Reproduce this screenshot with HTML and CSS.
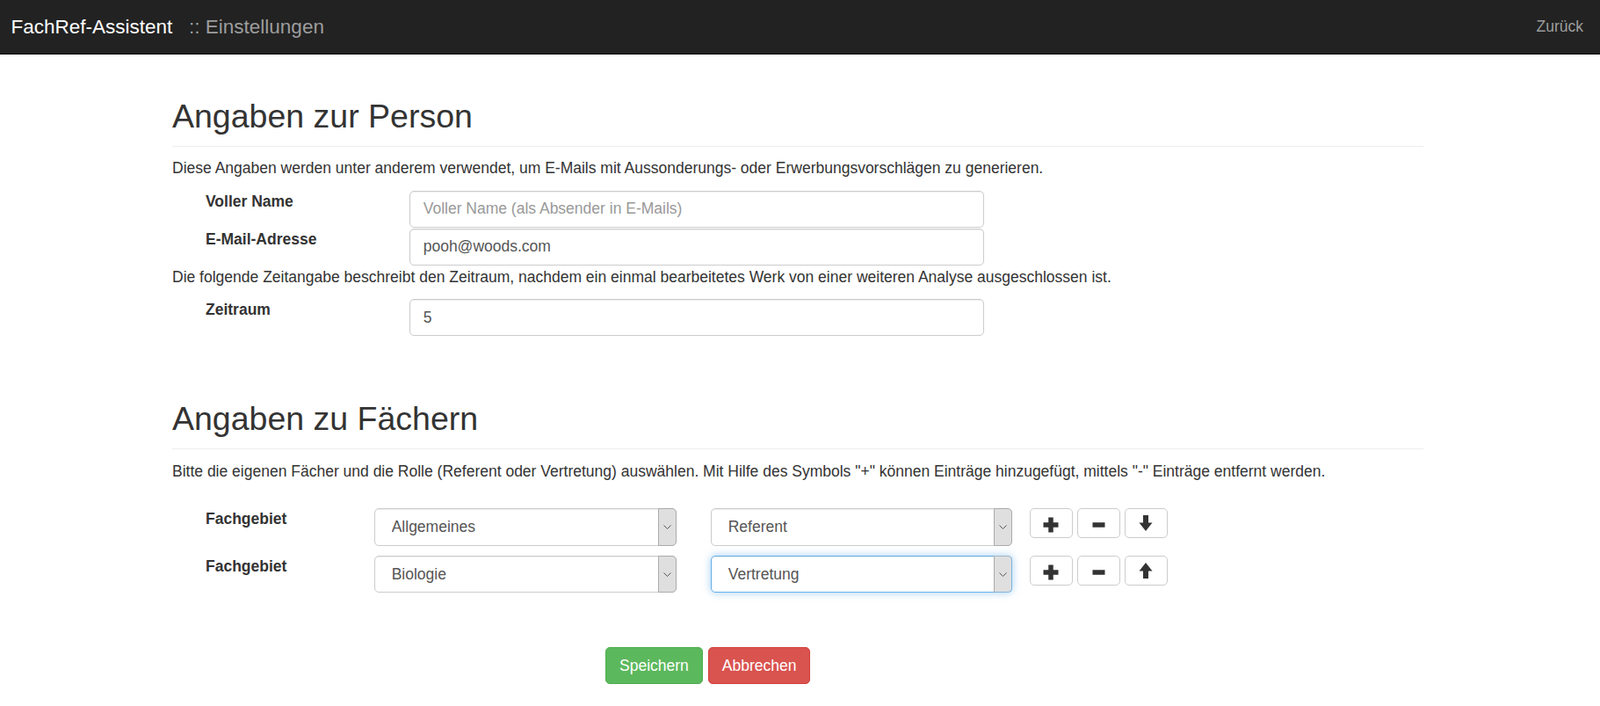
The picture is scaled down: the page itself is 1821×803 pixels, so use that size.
FILE: index.html
```html
<!DOCTYPE html>
<html lang="de">
<head>
<meta charset="utf-8">
<title>FachRef-Assistent :: Einstellungen</title>
<link rel="stylesheet" href="styles.css">
</head>
<body>
<nav class="navbar">
  <div class="brand"><span class="brand-name">FachRef-Assistent</span><span class="brand-sub">:: Einstellungen</span></div>
  <a class="nav-link" href="#">Zurück</a>
</nav>
<main class="container">
  <section class="section section-person">
    <header class="page-header"><h2>Angaben zur Person</h2></header>
    <p class="intro">Diese Angaben werden unter anderem verwendet, um E-Mails mit Aussonderungs- oder Erwerbungsvorschlägen zu generieren.</p>
    <div class="field-row">
      <label class="field-label" for="name">Voller Name</label>
      <input class="form-control" id="name" type="text" placeholder="Voller Name (als Absender in E-Mails)">
    </div>
    <div class="field-row">
      <label class="field-label" for="email">E-Mail-Adresse</label>
      <input class="form-control" id="email" type="text" value="pooh@woods.com">
    </div>
    <p class="intro">Die folgende Zeitangabe beschreibt den Zeitraum, nachdem ein einmal bearbeitetes Werk von einer weiteren Analyse ausgeschlossen ist.</p>
    <div class="field-row">
      <label class="field-label" for="zeitraum">Zeitraum</label>
      <input class="form-control" id="zeitraum" type="text" value="5">
    </div>
  </section>

  <section class="section section-faecher">
    <header class="page-header"><h2>Angaben zu Fächern</h2></header>
    <p class="intro">Bitte die eigenen Fächer und die Rolle (Referent oder Vertretung) auswählen. Mit Hilfe des Symbols "+" können Einträge hinzugefügt, mittels "-" Einträge entfernt werden.</p>
    <div class="fach-list">
      <div class="fach-row">
        <label class="fach-label">Fachgebiet</label>
        <div class="select-wrap select-fach">
          <select><option>Allgemeines</option><option>Biologie</option></select>
          <span class="select-arrow"><svg width="9" height="5" viewBox="0 0 9 5"><polyline points="0.5,0.5 4.5,4.5 8.5,0.5" fill="none" stroke="#555" stroke-width="1"/></svg></span>
        </div>
        <div class="select-wrap select-rolle">
          <select><option>Referent</option><option>Vertretung</option></select>
          <span class="select-arrow"><svg width="9" height="5" viewBox="0 0 9 5"><polyline points="0.5,0.5 4.5,4.5 8.5,0.5" fill="none" stroke="#555" stroke-width="1"/></svg></span>
        </div>
        <div class="icon-group">
          <button class="btn-icon" type="button" aria-label="hinzufügen"><svg class="ico ico-low" width="20" height="20" viewBox="0 0 20 20"><rect x="1.5" y="7.25" width="17" height="5.5" fill="#333"/><rect x="7.25" y="1.5" width="5.5" height="17" fill="#333"/></svg></button>
          <button class="btn-icon" type="button" aria-label="entfernen"><svg class="ico ico-low" width="20" height="20" viewBox="0 0 20 20"><rect x="3.5" y="7.25" width="14" height="5.5" fill="#333"/></svg></button>
          <button class="btn-icon" type="button" aria-label="nach unten"><svg class="ico" width="20" height="20" viewBox="0 0 20 20"><rect x="7" y="1" width="6" height="10" fill="#333"/><polygon points="2.5,9.5 17.5,9.5 10,19" fill="#333"/></svg></button>
        </div>
      </div>
      <div class="fach-row">
        <label class="fach-label">Fachgebiet</label>
        <div class="select-wrap select-fach">
          <select><option>Biologie</option><option>Allgemeines</option></select>
          <span class="select-arrow"><svg width="9" height="5" viewBox="0 0 9 5"><polyline points="0.5,0.5 4.5,4.5 8.5,0.5" fill="none" stroke="#555" stroke-width="1"/></svg></span>
        </div>
        <div class="select-wrap select-rolle is-focus">
          <select><option>Vertretung</option><option>Referent</option></select>
          <span class="select-arrow"><svg width="9" height="5" viewBox="0 0 9 5"><polyline points="0.5,0.5 4.5,4.5 8.5,0.5" fill="none" stroke="#555" stroke-width="1"/></svg></span>
        </div>
        <div class="icon-group">
          <button class="btn-icon" type="button" aria-label="hinzufügen"><svg class="ico ico-low" width="20" height="20" viewBox="0 0 20 20"><rect x="1.5" y="7.25" width="17" height="5.5" fill="#333"/><rect x="7.25" y="1.5" width="5.5" height="17" fill="#333"/></svg></button>
          <button class="btn-icon" type="button" aria-label="entfernen"><svg class="ico ico-low" width="20" height="20" viewBox="0 0 20 20"><rect x="3.5" y="7.25" width="14" height="5.5" fill="#333"/></svg></button>
          <button class="btn-icon" type="button" aria-label="nach oben"><svg class="ico" width="20" height="20" viewBox="0 0 20 20"><polygon points="10,1 17.5,10.5 2.5,10.5" fill="#333"/><rect x="7" y="9" width="6" height="10" fill="#333"/></svg></button>
        </div>
      </div>
    </div>
  </section>

  <div class="actions">
    <button class="btn btn-success" type="button">Speichern</button>
    <button class="btn btn-danger" type="button">Abbrechen</button>
  </div>
</main>
</body>
</html>
```
FILE: styles.css
```css
* {
  box-sizing: border-box;
}

body {
  margin: 0;
  font-family: "Liberation Sans", Arial, Helvetica, sans-serif;
  font-size: 17.5px;
  line-height: 25px;
  color: #333;
  background: #fff;
}

/* Navbar */
.navbar {
  display: flex;
  align-items: center;
  justify-content: space-between;
  height: 62px;
  background: #222;
  border-bottom: 1px solid #080808;
}

.brand {
  display: flex;
  align-items: center;
  padding-left: 12.5px;
  font-size: 22.5px;
}

.brand-name {
  color: #fff;
}

.brand-sub {
  color: #9d9d9d;
  margin-left: 18.75px;
}

.nav-link {
  color: #9d9d9d;
  text-decoration: none;
  padding-right: 19px;
  font-size: 17.5px;
}

/* Content */
.container {
  width: 1424px;
  margin-left: 196px;
}

.section-person {
  padding-top: 50px;
}

.section-faecher {
  margin-top: 74px;
}

.page-header {
  padding-bottom: 12.5px;
  border-bottom: 1px solid #eee;
  margin: 0 0 12.5px;
}

.page-header h2 {
  margin: 0;
  font-size: 37.5px;
  line-height: 41.25px;
  font-weight: normal;
}

.intro {
  margin: 0 0 12.5px;
}

.field-row {
  display: flex;
  align-items: flex-start;
  margin-bottom: 1px;
}

.field-label,
.fach-label {
  margin-left: 38px;
  font-weight: bold;
  flex: none;
}

.field-label {
  width: 231.7px;
}

.fach-label {
  width: 191.7px;
}

.form-control {
  width: 654px;
  height: 42px;
  padding: 0 15px;
  border: 1px solid #ccc;
  border-radius: 5px;
  font: inherit;
  color: #555;
  background: #fff;
  box-shadow: inset 0 1px 1px rgba(0, 0, 0, 0.075);
  outline: none;
}

.form-control::placeholder {
  color: #999;
}

/* Fach rows */
.fach-list {
  padding-top: 17.25px;
}

.fach-row {
  display: flex;
  align-items: flex-start;
  margin-bottom: 11px;
}

.select-wrap {
  display: flex;
  height: 42.5px;
  border: 1px solid #ccc;
  border-radius: 5px;
  background: #fff;
  box-shadow: inset 0 1px 1px rgba(0, 0, 0, 0.075);
  flex: none;
}

.select-fach {
  width: 344px;
}

.select-rolle {
  width: 343.5px;
  margin-left: 39px;
}

.select-wrap.is-focus {
  border-color: #66afe9;
  box-shadow: inset 0 1px 1px rgba(0, 0, 0, 0.075), 0 0 10px rgba(102, 175, 233, 0.6);
}

.select-wrap select {
  flex: 1;
  min-width: 0;
  height: 100%;
  -webkit-appearance: none;
  appearance: none;
  border: 0;
  background: transparent;
  font: inherit;
  color: #555;
  padding: 0 0 0 19px;
  outline: none;
}

.select-arrow {
  flex: none;
  width: 21px;
  margin: -1px -1px -1px 0;
  display: flex;
  align-items: center;
  justify-content: center;
  background: #dfdfdf;
  border: 1px solid #ababab;
  border-radius: 0 5px 5px 0;
}

.is-focus .select-arrow {
  border-color: #a3b8c9 #7fb4de #7fb4de #ababab;
}

.icon-group {
  display: flex;
  gap: 5.5px;
  margin-left: 20px;
}

.btn-icon {
  width: 48.5px;
  height: 34px;
  padding: 0;
  border: 1px solid #ccc;
  border-radius: 5px;
  background: #fff;
  display: flex;
  align-items: center;
  justify-content: center;
}

.ico {
  display: block;
}

.ico-low {
  margin-top: 4px;
}

/* Actions */
.actions {
  display: flex;
  gap: 6px;
  margin-left: 493px;
  margin-top: 61.5px;
}

.btn {
  height: 42.5px;
  padding: 0 15px;
  border: 1px solid transparent;
  border-radius: 5px;
  font: inherit;
  color: #fff;
  cursor: pointer;
}

.btn-success {
  background: #5cb85c;
  border-color: #4cae4c;
}

.btn-danger {
  background: #d9534f;
  border-color: #d43f3a;
}
```
